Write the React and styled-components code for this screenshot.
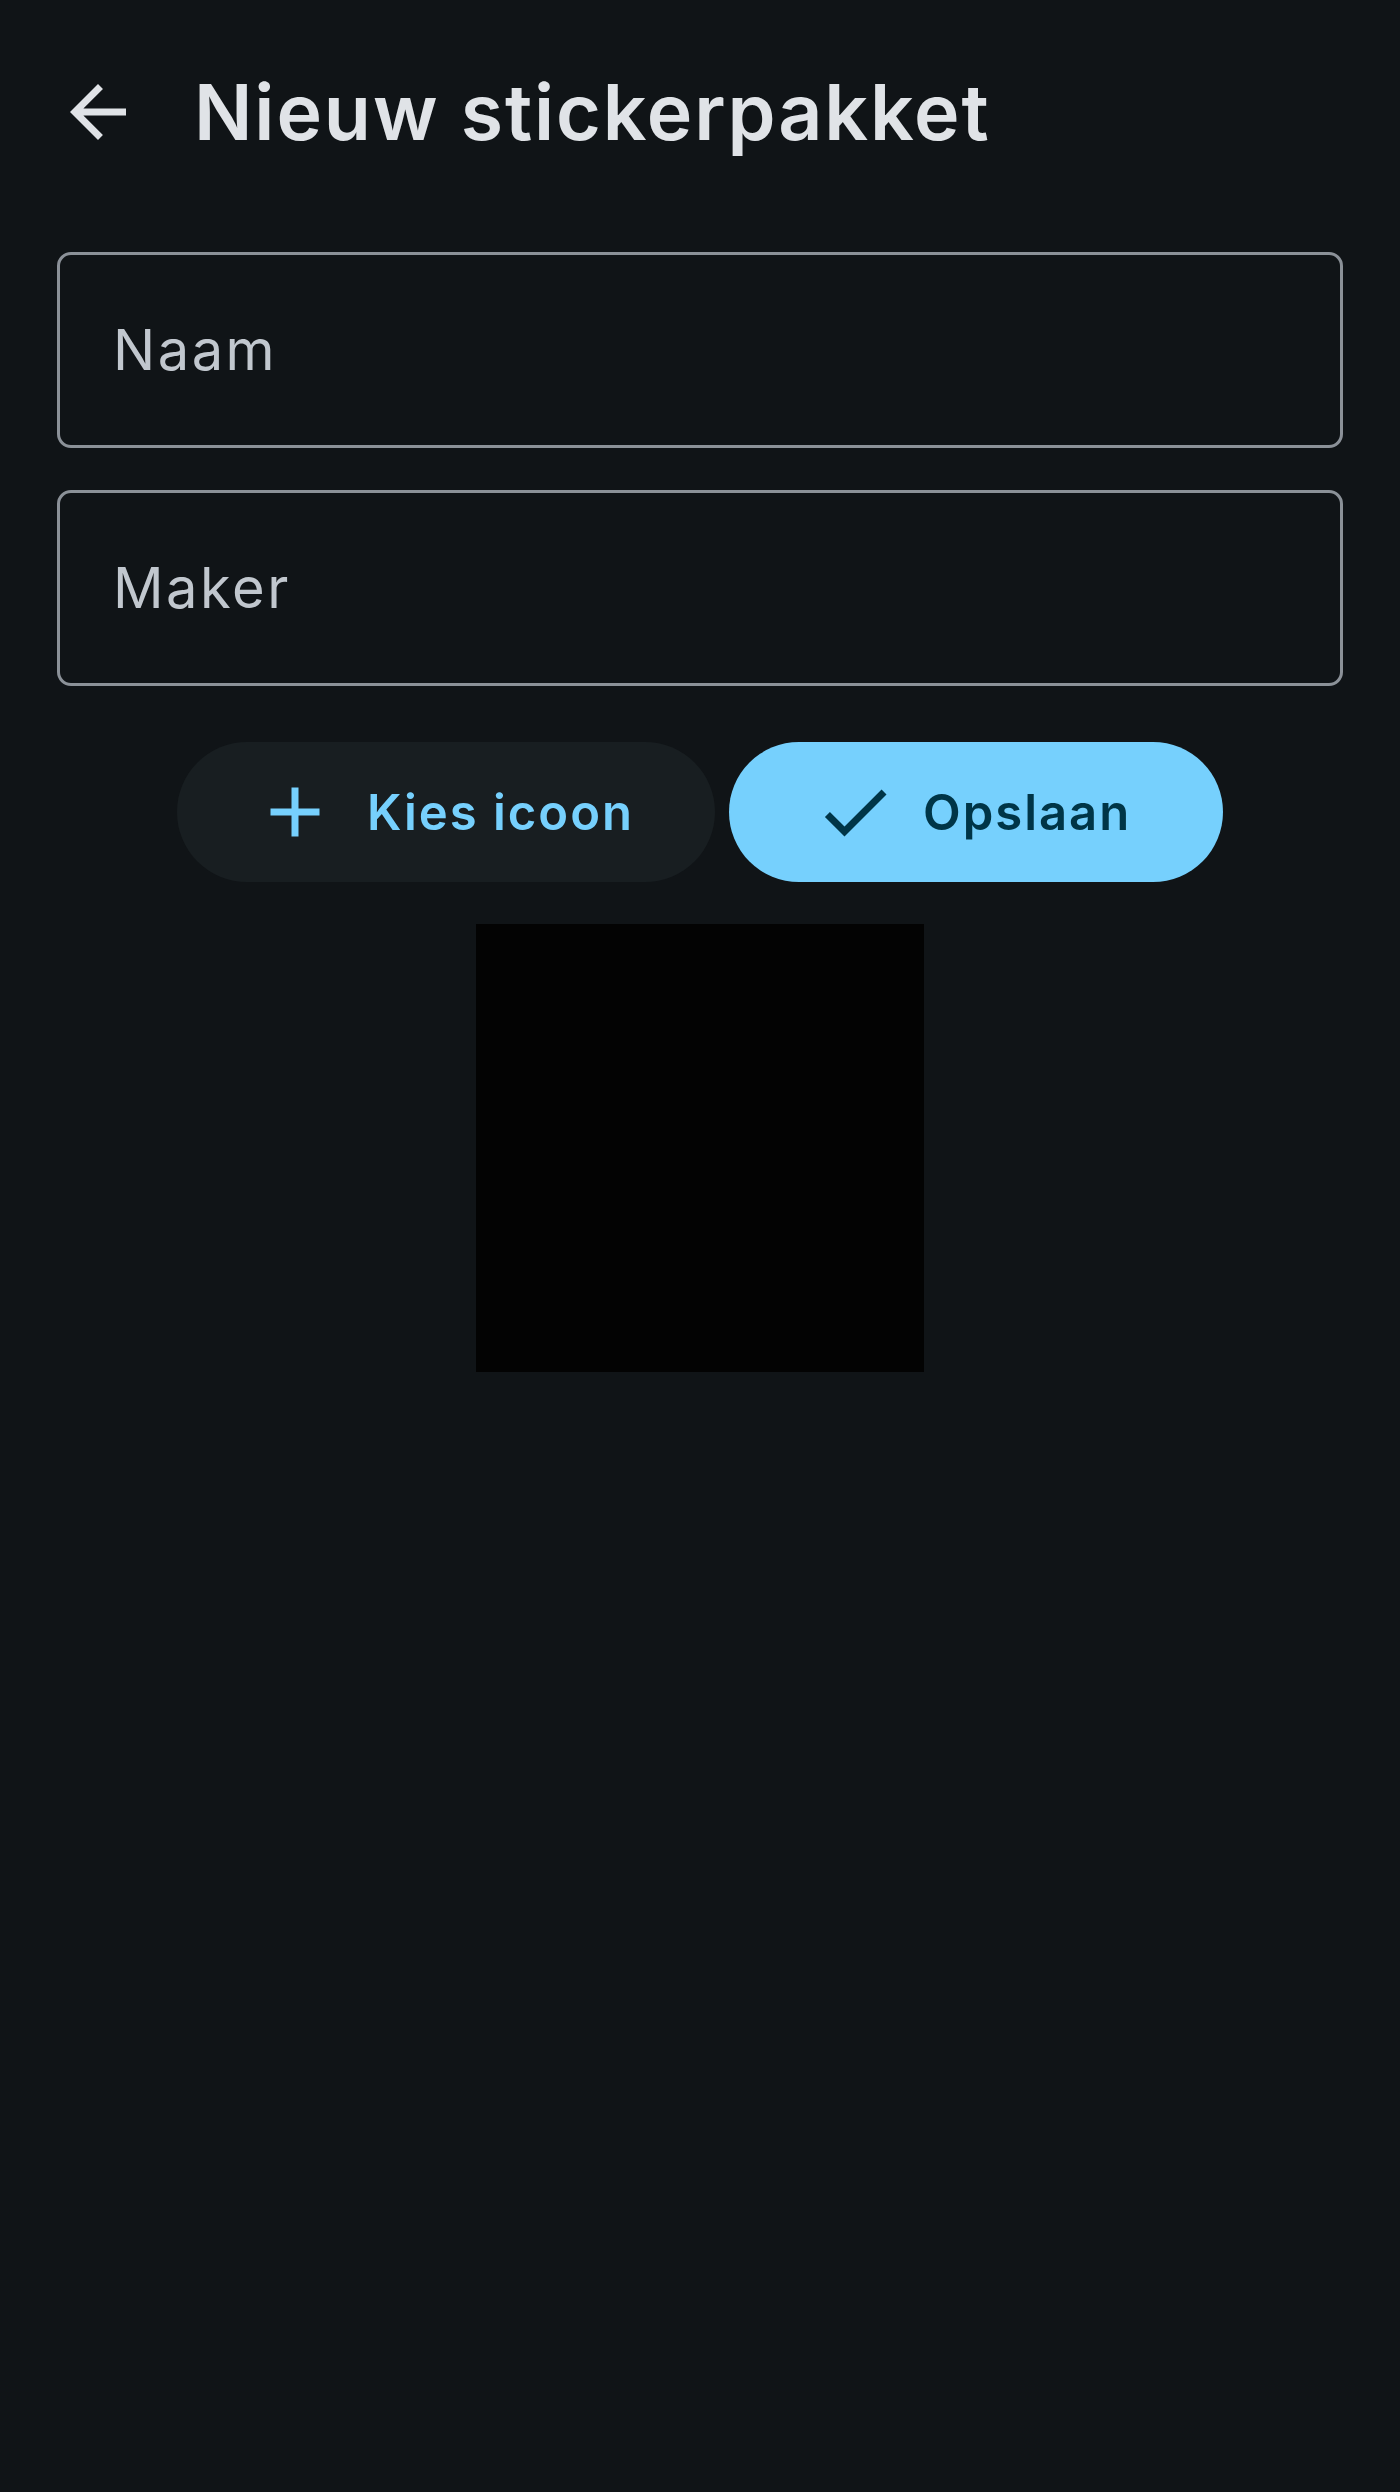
import React from "react";
import styled, { createGlobalStyle } from "styled-components";
import { MdArrowBack, MdAdd, MdCheck } from "react-icons/md";

const GlobalStyle = createGlobalStyle`
  html, body {
    margin: 0;
    padding: 0;
    background: #101417;
  }
  #root {
    min-height: 100vh;
  }
`;

function App() {
  return (
    <>
      <GlobalStyle />
      <Screen>
        <TopBar>
          <BackButton aria-label="Terug">
            <MdArrowBack />
          </BackButton>
          <Title>Nieuw stickerpakket</Title>
        </TopBar>

        <Form>
          <Field>
            <Input placeholder="Naam" />
          </Field>
          <Field>
            <Input placeholder="Maker" />
          </Field>

          <ButtonRow>
            <PillButton $width={538} $padLeft={76} $gap={30}>
              <MdAdd />
              <span>Kies icoon</span>
            </PillButton>
            <PillButton $primary $width={494} $padLeft={84} $gap={26}>
              <MdCheck />
              <span>Opslaan</span>
            </PillButton>
          </ButtonRow>

          <IconPreview />
        </Form>
      </Screen>
    </>
  );
}

export default App;

const Screen = styled.div`
  min-height: 2492px;
  background: #101417;
  font-family: Inter, "Noto Sans", "Liberation Sans", sans-serif;
`;

const TopBar = styled.header`
  height: 224px;
  display: flex;
  align-items: center;
  padding-left: 56px;
`;

const BackButton = styled.button`
  width: 84px;
  height: 84px;
  padding: 0;
  border: none;
  background: transparent;
  color: #e0e3e7;
  display: flex;
  align-items: center;
  justify-content: center;
  svg {
    width: 84px;
    height: 84px;
  }
`;

const Title = styled.h1`
  margin: 0 0 0 54px;
  font-size: 77px;
  font-weight: 600;
  color: #e0e3e7;
  letter-spacing: 1.9px;
`;

const Form = styled.main`
  display: flex;
  flex-direction: column;
  padding: 28px 57px 0;
`;

const Field = styled.div`
  height: 196px;
  box-sizing: border-box;
  border: 3.5px solid #8b9198;
  border-radius: 14px;
  display: flex;
  align-items: center;
  & + & {
    margin-top: 42px;
  }
`;

const Input = styled.input`
  flex: 1;
  height: 100%;
  border: none;
  outline: none;
  background: transparent;
  padding: 0 0 0 53px;
  font-family: inherit;
  font-size: 56px;
  letter-spacing: 2.5px;
  color: #e0e3e7;
  &::placeholder {
    color: #c1c7ce;
  }
`;

const ButtonRow = styled.div`
  display: flex;
  justify-content: center;
  gap: 14px;
  margin-top: 56px;
`;

const PillButton = styled.button`
  width: ${(p) => p.$width}px;
  height: 140px;
  box-sizing: border-box;
  border: none;
  border-radius: 70px;
  padding: 0 0 0 ${(p) => p.$padLeft}px;
  display: flex;
  align-items: center;
  gap: ${(p) => p.$gap}px;
  background: ${(p) => (p.$primary ? "#76d0fd" : "#181e21")};
  color: ${(p) => (p.$primary ? "#003547" : "#76d0fd")};
  font-family: inherit;
  font-size: 49px;
  font-weight: 600;
  letter-spacing: 2px;
  svg {
    width: 84px;
    height: 84px;
    flex-shrink: 0;
  }
`;

const IconPreview = styled.div`
  width: 448px;
  height: 448px;
  margin: 42px auto 0;
  background: #030303;
`;
